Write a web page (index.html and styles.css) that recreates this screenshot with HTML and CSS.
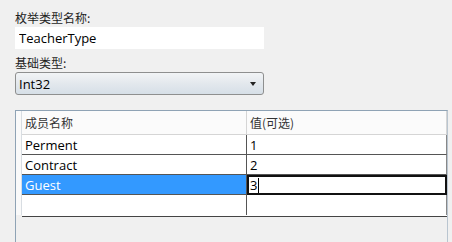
FILE: index.html
```html
<!DOCTYPE html>
<html>
<head>
    <title>枚举类型</title>
    <link rel="stylesheet" href="styles.css">
</head>
<body>
    <div class="editor">
        <div class="field">
            <label for="enumName">枚举类型名称:</label>
            <input type="text" id="enumName" value="TeacherType">
        </div>
        <div class="field">
            <label for="baseType">基础类型:</label>
            <div class="select" id="baseType">
                <span>Int32</span>
                <span class="arrow"></span>
            </div>
        </div>
        <div class="member-panel">
            <div class="gutter"></div>
            <div class="member-grid">
                <div class="cell head">成员名称</div>
                <div class="cell head">值(可选)</div>
                <div class="cell">Perment</div>
                <div class="cell">1</div>
                <div class="cell">Contract</div>
                <div class="cell">2</div>
                <div class="cell selected">Guest</div>
                <div class="cell editing">3<span class="caret"></span></div>
                <div class="cell"></div>
                <div class="cell"></div>
            </div>
        </div>
    </div>
</body>
</html>
```
FILE: styles.css
```css
body {
    margin: 0;
    background-color: #f0f0f0;
    font-family: "Open Sans", "Noto Sans CJK SC", sans-serif;
    font-size: 12px;
    color: #000;
    height: 242px;
    overflow: hidden;
}

.editor {
    display: flex;
    flex-direction: column;
    padding: 8px 4px 0 15px;
}

.field {
    display: flex;
    flex-direction: column;
    width: 249px;
}

.field label {
    font-family: "Noto Sans CJK SC", sans-serif;
    height: 19px;
    line-height: 19px;
    color: #1e1e1e;
}

.field input {
    height: 22px;
    margin: 0 0 4px 0;
    padding: 0 4px;
    border: none;
    background-color: #fff;
    font-family: "Open Sans", sans-serif;
    font-size: 13px;
    outline: none;
    box-sizing: border-box;
}

.select {
    display: flex;
    align-items: center;
    justify-content: space-between;
    height: 23px;
    padding: 0 7px 0 3px;
    border: 1px solid #8e8f8f;
    border-radius: 3px;
    background: linear-gradient(#f2f4f6, #e3e8ed 50%, #d6dfe7);
    box-sizing: border-box;
    font-size: 13px;
}

.arrow {
    width: 0;
    height: 0;
    border-left: 3px solid transparent;
    border-right: 3px solid transparent;
    border-top: 4px solid #222;
}

.member-panel {
    display: flex;
    margin-top: 15px;
    height: 140px;
    border: 1px solid #8fa3b5;
    border-right-color: #b9c5d0;
    background-color: #f0f0f0;
}

.gutter {
    width: 6px;
    height: 104px;
    border-right: 1px solid #d8dde2;
    background-color: #fafafa;
    box-sizing: border-box;
}

.member-grid {
    display: grid;
    grid-template-columns: 225px 200px;
    grid-template-rows: 24px 20px 20px 20px 20px;
    height: 105px;
    border-bottom: 1px solid #444;
    background-color: #fff;
}

.cell {
    display: flex;
    align-items: center;
    padding-left: 3px;
    border-bottom: 1px solid #555;
    font-size: 13px;
    box-sizing: border-box;
}

.cell:nth-child(odd) {
    border-right: 1px solid #555;
}

.cell:nth-child(even) {
    border-right: 1px solid #888;
}

.cell:nth-last-child(-n+2) {
    border-bottom: none;
}

.head {
    font-family: "Noto Sans CJK SC", sans-serif;
    font-size: 12px;
    color: #333;
    background-color: #fbfbfb;
    border-bottom: 1px solid #d5d5d5;
    border-right-color: #d5d5d5 !important;
}

.selected {
    background-color: #3399ff;
    color: #fff;
}

.editing {
    border: 2px solid #111 !important;
    padding-left: 1px;
}

.caret {
    width: 1px;
    height: 15px;
    margin-left: 1px;
    background-color: #000;
}
```
